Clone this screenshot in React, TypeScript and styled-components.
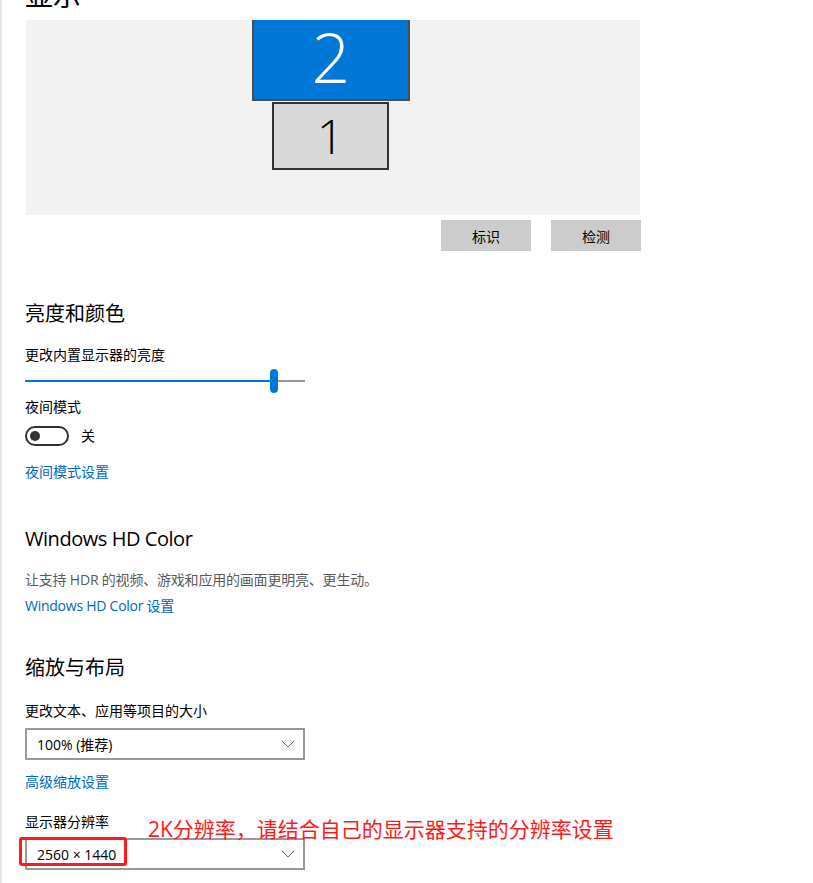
import styled, { createGlobalStyle } from "styled-components";

const GlobalStyle = createGlobalStyle`
  html, body {
    margin: 0;
    padding: 0;
    background: #fff;
  }
  body {
    font-family: "Open Sans", "Noto Sans CJK SC", sans-serif;
    color: #000;
    overflow: hidden;
  }
`;

const Page = styled.div`
  border-left: 2px solid #e6e6e6;
  padding-left: 23px;
  min-height: 883px;
  box-sizing: border-box;
  display: flex;
  flex-direction: column;
  align-items: flex-start;
`;

const PageTitle = styled.h1`
  margin: -19px 0 0;
  font-size: 28px;
  line-height: 28px;
  font-weight: 400;
`;

const Preview = styled.div`
  position: relative;
  margin: 11px 0 0 1px;
  width: 614px;
  height: 195px;
  background: #f2f2f2;
  overflow: hidden;
`;

const Monitor = styled.div<{ $active?: boolean; $left: number; $top: number; $w: number; $h: number }>`
  position: absolute;
  left: ${(p) => p.$left}px;
  top: ${(p) => p.$top}px;
  width: ${(p) => p.$w}px;
  height: ${(p) => p.$h}px;
  box-sizing: border-box;
  border: 2px solid ${(p) => (p.$active ? "#4d4d4d" : "#333")};
  background: ${(p) => (p.$active ? "#0078d7" : "#d9d9d9")};
  color: ${(p) => (p.$active ? "#fff" : "#000")};
  display: flex;
  align-items: center;
  justify-content: center;
  font-family: "Open Sans", sans-serif;
  font-weight: 300;
  font-size: ${(p) => (p.$active ? 68 : 48)}px;
  line-height: 1;
`;

const ButtonRow = styled.div`
  margin-top: 5px;
  width: 616px;
  display: flex;
  justify-content: flex-end;
  gap: 20px;
`;

const Button = styled.button`
  width: 90px;
  height: 31px;
  border: none;
  background: #ccc;
  font-family: "Noto Sans CJK SC", sans-serif;
  font-size: 14px;
  color: #000;
  padding: 0;
`;

const Heading = styled.h2<{ $mt: number; $latin?: boolean }>`
  margin: ${(p) => p.$mt}px 0 0;
  font-size: 20px;
  line-height: 28px;
  font-weight: 400;
  letter-spacing: ${(p) => (p.$latin ? "-0.45px" : "0")};
`;

const Label = styled.div<{ $mt: number; $muted?: boolean }>`
  margin-top: ${(p) => p.$mt}px;
  font-size: 14px;
  line-height: 20px;
  color: ${(p) => (p.$muted ? "#5a5a5a" : "#000")};
  letter-spacing: ${(p) => (p.$muted ? "-0.2px" : "0")};
`;

const Link = styled.a<{ $mt: number; $latin?: boolean }>`
  margin-top: ${(p) => p.$mt}px;
  font-size: 14px;
  line-height: 20px;
  color: #0067c0;
  text-decoration: none;
  letter-spacing: ${(p) => (p.$latin ? "-0.25px" : "0")};
`;

const Slider = styled.div`
  margin-top: 4px;
  width: 280px;
  height: 24px;
  display: flex;
  align-items: center;
`;

const Track = styled.div<{ $filled?: boolean }>`
  height: 2px;
  background: ${(p) => (p.$filled ? "#0078d7" : "#999")};
  flex: ${(p) => (p.$filled ? "0 0 245px" : "1")};
`;

const Thumb = styled.div`
  width: 8px;
  height: 24px;
  border-radius: 4px;
  background: #0078d7;
`;

const ToggleRow = styled.div`
  margin-top: 9px;
  display: flex;
  align-items: center;
  gap: 12px;
  font-size: 14px;
  line-height: 20px;
`;

const Toggle = styled.div`
  width: 44px;
  height: 20px;
  box-sizing: border-box;
  border: 2px solid #333;
  border-radius: 10px;
  display: flex;
  align-items: center;
  padding-left: 3px;
`;

const Knob = styled.div`
  width: 10px;
  height: 10px;
  border-radius: 50%;
  background: #333;
`;

const SelectWrap = styled.div<{ $mt: number }>`
  position: relative;
  margin-top: ${(p) => p.$mt}px;
`;

const Select = styled.div`
  width: 280px;
  height: 32px;
  box-sizing: border-box;
  border: 2px solid #999;
  padding: 0 8px 0 10px;
  display: flex;
  align-items: center;
  justify-content: space-between;
  font-size: 14px;
`;

const Highlight = styled.div`
  position: absolute;
  left: -6px;
  top: -1px;
  width: 108px;
  height: 29px;
  box-sizing: border-box;
  border: 3px solid #ff1a1a;
  border-radius: 3px;
`;

const Note = styled.div`
  position: absolute;
  left: 123px;
  top: -23px;
  white-space: nowrap;
  font-size: 21px;
  line-height: 28px;
  color: #ff1a1a;
`;

const Chevron = () => (
  <svg width="14" height="8" viewBox="0 0 14 8" fill="none">
    <path d="M1 1l6 6 6-6" stroke="#666" strokeWidth="1" />
  </svg>
);

const App = () => {
  return (
    <>
      <GlobalStyle />
      <Page>
        <PageTitle>显示</PageTitle>
        <Preview>
          <Monitor $active $left={226} $top={-8} $w={158} $h={89}>
            2
          </Monitor>
          <Monitor $left={246} $top={82} $w={117} $h={68}>
            1
          </Monitor>
        </Preview>
        <ButtonRow>
          <Button>标识</Button>
          <Button>检测</Button>
        </ButtonRow>

        <Heading $mt={49}>亮度和颜色</Heading>
        <Label $mt={17}>更改内置显示器的亮度</Label>
        <Slider>
          <Track $filled />
          <Thumb />
          <Track />
        </Slider>
        <Label $mt={4}>夜间模式</Label>
        <ToggleRow>
          <Toggle>
            <Knob />
          </Toggle>
          <span>关</span>
        </ToggleRow>
        <Link $mt={16}>夜间模式设置</Link>

        <Heading $mt={43} $latin>
          Windows HD Color
        </Heading>
        <Label $mt={17} $muted>
          让支持 HDR 的视频、游戏和应用的画面更明亮、更生动。
        </Label>
        <Link $mt={6} $latin>
          Windows HD Color 设置
        </Link>

        <Heading $mt={38}>缩放与布局</Heading>
        <Label $mt={19}>更改文本、应用等项目的大小</Label>
        <SelectWrap $mt={7}>
          <Select>
            <span>100% (推荐)</span>
            <Chevron />
          </Select>
        </SelectWrap>
        <Link $mt={12}>高级缩放设置</Link>
        <Label $mt={20}>显示器分辨率</Label>
        <SelectWrap $mt={6}>
          <Select>
            <span>2560 × 1440</span>
            <Chevron />
          </Select>
          <Highlight />
          <Note>2K分辨率，请结合自己的显示器支持的分辨率设置</Note>
        </SelectWrap>
      </Page>
    </>
  );
};

export default App;
